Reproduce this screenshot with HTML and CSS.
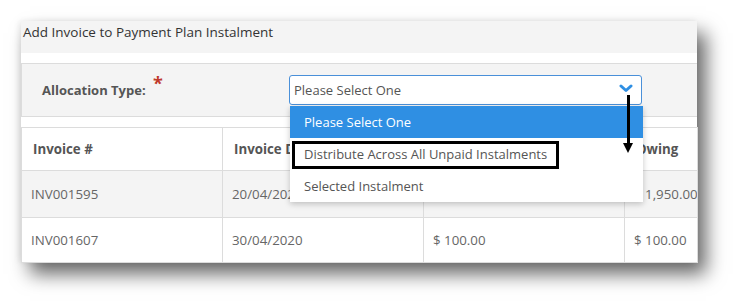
FILE: index.html
```html
<!DOCTYPE html>
<html lang="en">
  <head>
    <meta charset="UTF-8" />
    <title>Add Invoice to Payment Plan Instalment</title>
    <link rel="stylesheet" href="styles.css">
  </head>
  <body>
    <div class="modal">
      <div class="modal-title">Add Invoice to Payment Plan Instalment</div>

      <div class="form-row">
        <label class="form-label">Allocation Type: <span class="required">*</span></label>
        <div class="select-wrap">
          <div class="select">
            <span>Please Select One</span>
            <svg class="chevron" width="14" height="9" viewBox="0 0 14 9">
              <path d="M2 2 L7 6.5 L12 2" fill="none" stroke="#2f8fe3" stroke-width="3" stroke-linecap="round" stroke-linejoin="round"/>
            </svg>
          </div>
          <ul class="dropdown">
            <li class="option active">Please Select One</li>
            <li class="option">Distribute Across All Unpaid Instalments<span class="callout"></span></li>
            <li class="option">Selected Instalment</li>
          </ul>
          <div class="pointer"></div>
        </div>
      </div>

      <table class="invoices">
        <thead>
          <tr>
            <th>Invoice #</th>
            <th>Invoice Date</th>
            <th>Amount</th>
            <th>Owing</th>
          </tr>
        </thead>
        <tbody>
          <tr class="shaded">
            <td>INV001595</td>
            <td>20/04/2020</td>
            <td>$ 1,950.00</td>
            <td>$ 1,950.00</td>
          </tr>
          <tr>
            <td>INV001607</td>
            <td>30/04/2020</td>
            <td>$ 100.00</td>
            <td>$ 100.00</td>
          </tr>
        </tbody>
      </table>
    </div>
  </body>
</html>
```

FILE: styles.css
```css
:root {
  --panel: #f4f4f4;
  --border: #dcdcdc;
  --text: #666666;
  --label: #555555;
  --blue: #2f8fe3;
  --font: 'Open Sans', 'DejaVu Sans', sans-serif;
}

* {
  box-sizing: border-box;
  margin: 0;
  padding: 0;
}

html,
body {
  min-height: 100vh;
}

body {
  font-family: var(--font);
  background: #ffffff;
  padding: 21px 0 0 21px;
}

.modal {
  position: relative;
  width: 676px;
  height: 241px;
  background: #ffffff;
  box-shadow: 9px 12px 18px rgba(0, 0, 0, 0.6), -2px 0 6px rgba(0, 0, 0, 0.08);
}

.modal-title {
  height: 32px;
  line-height: 22px;
  padding-left: 2px;
  background: var(--panel);
  color: #333333;
  font-size: 13.5px;
}

.form-row {
  display: flex;
  align-items: center;
  height: 54px;
  margin-top: 10px;
  padding-left: 20px;
  background: var(--panel);
  border-top: 1px solid var(--border);
  border-bottom: 1px solid var(--border);
  border-left: 1px solid var(--border);
}

.form-label {
  width: 247px;
  font-size: 13px;
  font-weight: 700;
  color: var(--label);
  margin-top: -5px;
}

.required {
  position: relative;
  top: -5px;
  margin-left: 4px;
  color: #c0392b;
  font-size: 18px;
}

.select-wrap {
  position: relative;
  width: 353px;
}

.select {
  display: flex;
  align-items: center;
  justify-content: space-between;
  height: 30px;
  padding: 0 8px 0 4px;
  background: #ffffff;
  border: 1px solid #4a90d9;
  border-radius: 3px;
  color: var(--label);
  font-size: 13px;
}

.chevron {
  margin-top: -4px;
}

.dropdown {
  position: absolute;
  top: 31px;
  left: 1px;
  width: 353px;
  list-style: none;
  background: #ffffff;
  box-shadow: 0 2px 6px rgba(0, 0, 0, 0.22);
  z-index: 2;
}

.option {
  position: relative;
  height: 32px;
  line-height: 32px;
  padding-left: 14px;
  font-size: 13px;
  color: var(--label);
}

.option.active {
  background: var(--blue);
  color: #ffffff;
}

.callout {
  position: absolute;
  left: 2px;
  top: 3px;
  width: 267px;
  height: 28px;
  border: 3px solid #000000;
}

.pointer {
  position: absolute;
  left: 338px;
  top: 20px;
  width: 3px;
  height: 50px;
  background: #000000;
  z-index: 3;
}

.pointer::after {
  content: "";
  position: absolute;
  left: -4px;
  top: 48px;
  border-left: 5.5px solid transparent;
  border-right: 5.5px solid transparent;
  border-top: 10px solid #000000;
}

.invoices {
  width: 677px;
  margin-top: 10px;
  border-collapse: collapse;
  table-layout: fixed;
  font-size: 13.3px;
}

.invoices th,
.invoices td {
  border: 1px solid var(--border);
  text-align: left;
  white-space: nowrap;
  overflow: hidden;
}

.invoices th:nth-child(-n+3),
.invoices td:nth-child(-n+3) {
  width: 201px;
}

.invoices th {
  height: 43px;
  padding-left: 11px;
  font-weight: 700;
  color: var(--label);
}

.invoices td {
  padding-left: 9px;
  color: #666666;
}

.invoices tbody tr:first-child td {
  height: 47px;
}

.invoices tbody tr:last-child td {
  height: 45px;
}

.invoices tr.shaded td {
  background: var(--panel);
}
```
